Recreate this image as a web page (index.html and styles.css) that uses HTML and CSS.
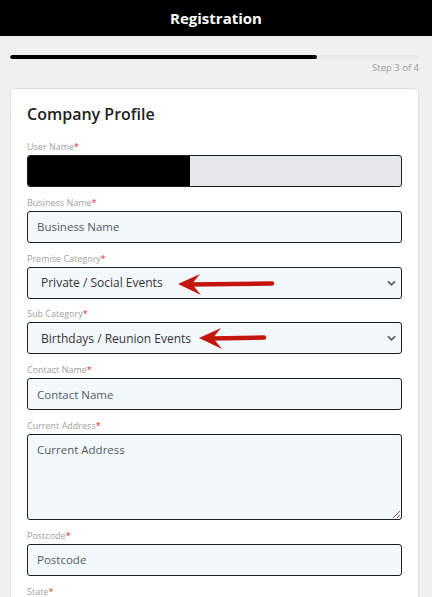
FILE: index.html
```html
<!DOCTYPE html>
<html lang="en">
<head>
  <meta charset="UTF-8">
  <title>Registration</title>
  <link rel="stylesheet" href="styles.css">
</head>
<body>
  <header class="topbar">
    <h1>Registration</h1>
  </header>

  <main class="page">
    <div class="progress">
      <div class="progress-fill" style="width: 75%"></div>
    </div>
    <div class="step">Step 3 of 4</div>

    <section class="card">
      <h2>Company Profile</h2>

      <div class="field">
        <label>User Name<span class="req">*</span></label>
        <div class="control">
          <input class="input" type="text" disabled>
          <div class="redact"></div>
        </div>
      </div>

      <div class="field">
        <label>Business Name<span class="req">*</span></label>
        <input class="input" type="text" placeholder="Business Name">
      </div>

      <div class="field">
        <label>Premise Category<span class="req">*</span></label>
        <div class="control">
          <select class="input select">
            <option>Private / Social Events</option>
          </select>
          <svg class="chevron" viewBox="0 0 10 6"><path d="M1 1l4 4 4-4" fill="none" stroke="#555" stroke-width="1.8"/></svg>
          <svg class="arrow" viewBox="0 0 375 32">
            <path d="M162 17.5 L245 16.5" stroke="#c2160f" stroke-width="4.5" stroke-linecap="round" fill="none"/>
            <path d="M151 17 L173 7 L165 17 L174 28 Z" fill="#c2160f"/>
          </svg>
        </div>
      </div>

      <div class="field">
        <label>Sub Category<span class="req">*</span></label>
        <div class="control">
          <select class="input select">
            <option>Birthdays / Reunion Events</option>
          </select>
          <svg class="chevron" viewBox="0 0 10 6"><path d="M1 1l4 4 4-4" fill="none" stroke="#555" stroke-width="1.8"/></svg>
          <svg class="arrow" viewBox="0 0 375 32">
            <path d="M183 16.5 L237 15.5" stroke="#c2160f" stroke-width="4.5" stroke-linecap="round" fill="none"/>
            <path d="M172 16 L194 6 L186 16 L195 27 Z" fill="#c2160f"/>
          </svg>
        </div>
      </div>

      <div class="field">
        <label>Contact Name<span class="req">*</span></label>
        <input class="input" type="text" placeholder="Contact Name">
      </div>

      <div class="field">
        <label>Current Address<span class="req">*</span></label>
        <textarea class="input textarea" placeholder="Current Address"></textarea>
      </div>

      <div class="field">
        <label>Postcode<span class="req">*</span></label>
        <input class="input" type="text" placeholder="Postcode">
      </div>

      <div class="field">
        <label>State<span class="req">*</span></label>
        <select class="input select">
          <option>Select State</option>
        </select>
      </div>
    </section>
  </main>
</body>
</html>
```

FILE: styles.css
```css
body {
  margin: 0;
  padding: 0;
  background: #f0f0f0;
  font-family: "Open Sans", "Noto Sans", Arial, sans-serif;
  color: #222;
}
.topbar {
  background: #000;
  color: #fff;
  height: 36px;
  display: flex;
  align-items: center;
  justify-content: center;
}
.topbar h1 {
  margin: 0;
  font-size: 15px;
  font-weight: 700;
}
.page {
  padding: 19px 13px 0 10px;
}
.progress {
  height: 4px;
  background: #e6e8ea;
  border-radius: 2px;
  overflow: hidden;
}
.progress-fill {
  height: 100%;
  background: #000;
  border-radius: 2px;
}
.step {
  text-align: right;
  font-size: 9.5px;
  color: #999;
  margin-top: 3px;
  line-height: 12px;
}
.card {
  margin-top: 14px;
  background: #fff;
  border: 1px solid #dedede;
  border-radius: 4px;
  padding: 13px 16px 20px 16px;
}
.card h2 {
  margin: 0 0 15px 0;
  font-size: 16px;
  font-weight: 600;
  line-height: 24px;
  color: #222;
}
.field {
  margin-bottom: 9.8px;
}
.field label {
  display: block;
  font-size: 9px;
  line-height: 12px;
  color: #a0a0a0;
  margin-bottom: 2px;
}
.req {
  color: #d9342b;
}
.control {
  position: relative;
}
.input {
  display: block;
  box-sizing: border-box;
  width: 100%;
  height: 32px;
  margin: 0;
  padding: 0 9px;
  border: 1px solid #1e1e1e;
  border-radius: 3px;
  background: #f3f8fd;
  font-family: inherit;
  font-size: 11.5px;
  color: #333;
}
.input::placeholder {
  color: #555a60;
}
.input:disabled {
  background: #e5e8eb;
}
.redact {
  position: absolute;
  left: 1px;
  top: 1px;
  bottom: 1px;
  width: 162px;
  background: #000;
  border-radius: 2px 0 0 2px;
}
.select {
  appearance: none;
  -webkit-appearance: none;
  padding-left: 13px;
  font-size: 12px;
}
.chevron {
  position: absolute;
  right: 6px;
  top: 13px;
  width: 9px;
  height: 6px;
  pointer-events: none;
}
.arrow {
  position: absolute;
  left: 0;
  top: 0;
  width: 100%;
  height: 32px;
  pointer-events: none;
}
.textarea {
  height: 86px;
  padding: 7px 9px;
  resize: vertical;
}
```
